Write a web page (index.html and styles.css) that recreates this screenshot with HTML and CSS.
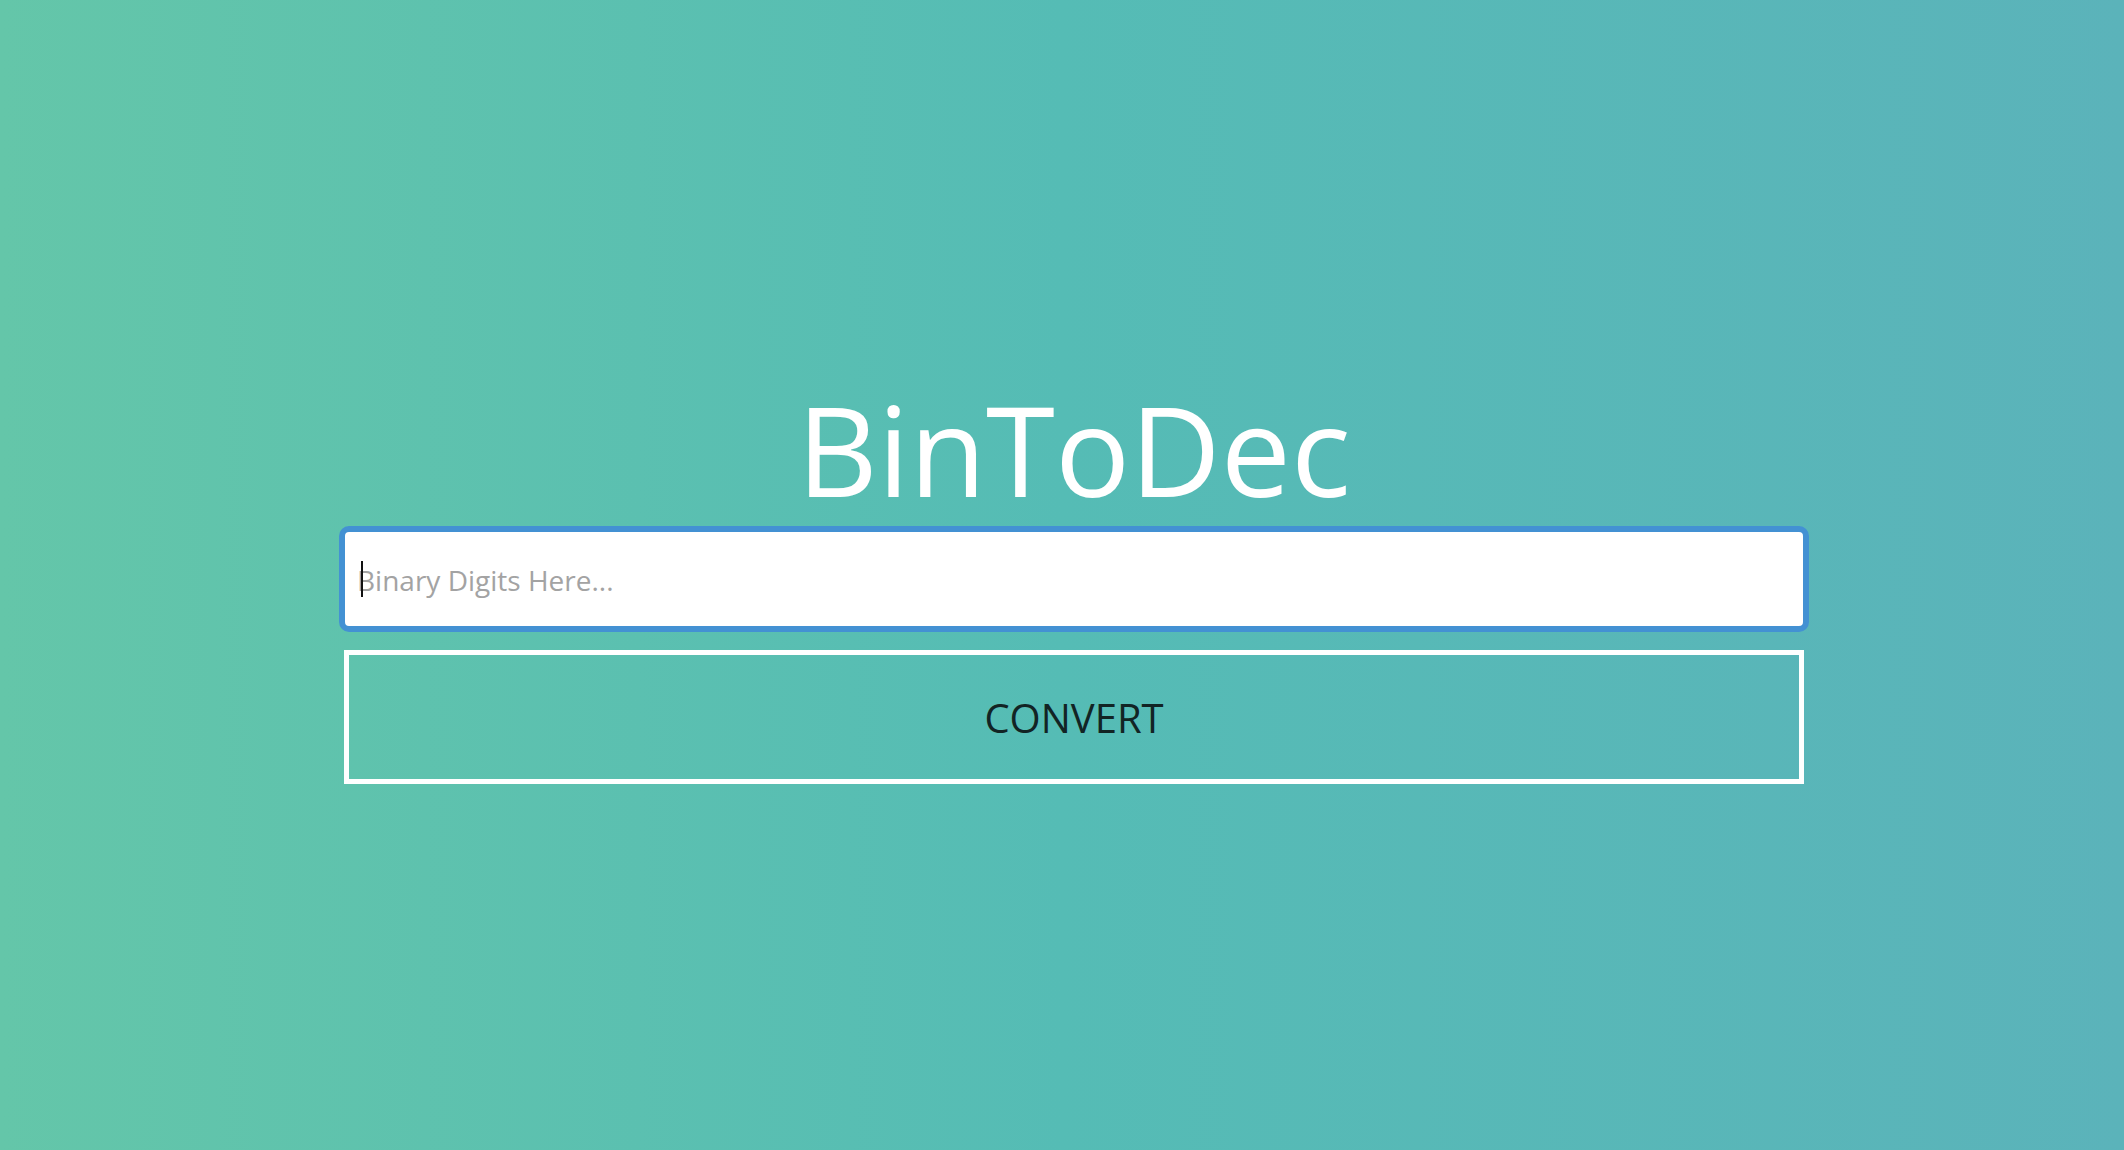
FILE: index.html
```html
<!DOCTYPE html>
<html lang="en">
<head>
<meta charset="utf-8">
<title>BinToDec</title>
<link rel="stylesheet" href="styles.css">
</head>
<body>
<main class="app">
  <h1 class="title">BinToDec</h1>
  <div class="field">
    <input class="binary-input" type="text" placeholder="Binary Digits Here...">
    <span class="caret"></span>
  </div>
  <button class="convert-btn" type="button">CONVERT</button>
</main>
</body>
</html>
```

FILE: styles.css
```css
html, body {
  margin: 0;
  padding: 0;
  height: 100%;
}

body {
  background: linear-gradient(to right, #64c6a9 0%, #55bcb5 50%, #5bb3ba 100%);
  font-family: "Open Sans", "Liberation Sans", sans-serif;
}

.app {
  display: flex;
  flex-direction: column;
  align-items: center;
  padding-top: 386px;
  padding-left: 24px;
  box-sizing: border-box;
}

.title {
  margin: 0;
  font-size: 125px;
  font-weight: 400;
  line-height: 1;
  height: 125px;
  color: #ffffff;
}

.field {
  position: relative;
  margin-top: 15px;
  width: 1470px;
}

.binary-input {
  display: block;
  width: 100%;
  height: 106px;
  box-sizing: border-box;
  border: 6px solid #4391d3;
  border-radius: 10px;
  background: #ffffff;
  padding: 2px 0 0 12px;
  font-family: "Open Sans", "Liberation Sans", sans-serif;
  font-size: 28px;
  color: #333;
  outline: none;
}

.binary-input::placeholder {
  color: #a3a3a3;
}

.caret {
  position: absolute;
  left: 22px;
  top: 35px;
  width: 2px;
  height: 36px;
  background: #111;
}

.convert-btn {
  margin-top: 18px;
  width: 1460px;
  height: 134px;
  box-sizing: border-box;
  border: 5.5px solid #ffffff;
  background: transparent;
  font-family: "Open Sans", "Liberation Sans", sans-serif;
  font-size: 40px;
  color: #122424;
  padding: 0;
  cursor: pointer;
}
```
